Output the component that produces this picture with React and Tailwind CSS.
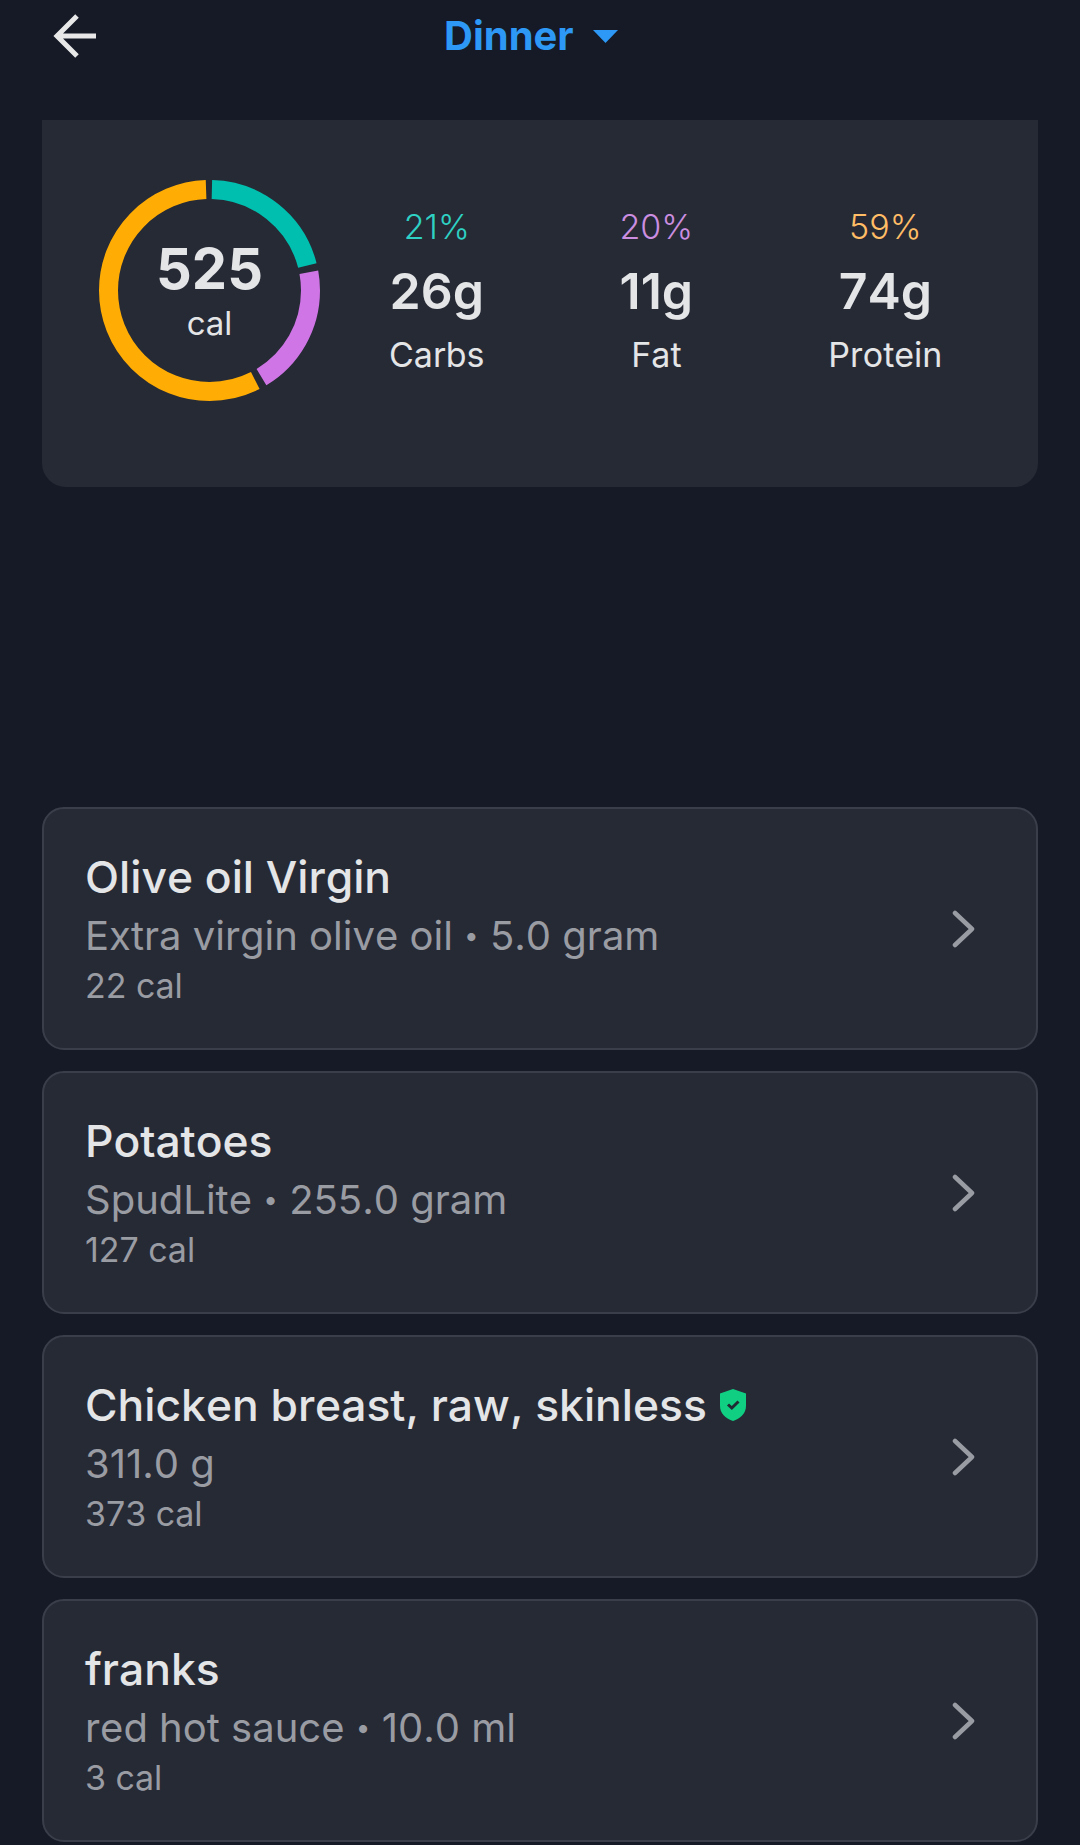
const font = { fontFamily: '"Inter", "Liberation Sans", sans-serif' };

const macros = [
  { pct: '21%', grams: '26g', label: 'Carbs', color: 'text-[#2ed1c3]' },
  { pct: '20%', grams: '11g', label: 'Fat', color: 'text-[#cb8ee0]' },
  { pct: '59%', grams: '74g', label: 'Protein', color: 'text-[#ffbd66]' },
];

const foods = [
  { name: 'Olive oil Virgin', brand: 'Extra virgin olive oil', amount: '5.0 gram', cal: '22 cal' },
  { name: 'Potatoes', brand: 'SpudLite', amount: '255.0 gram', cal: '127 cal' },
  { name: 'Chicken breast, raw, skinless', amount: '311.0 g', cal: '373 cal', verified: true },
  { name: 'franks', brand: 'red hot sauce', amount: '10.0 ml', cal: '3 cal' },
];

// start/end are degrees clockwise from the top of the ring
const segments = [
  { start: 1.4, end: 75.6, color: '#00bfae' },
  { start: 79.6, end: 149, color: '#cf75e6' },
  { start: 153, end: 358, color: '#ffad05' },
];

function Ring() {
  return (
    <div className="relative w-[221px] h-[221px] shrink-0">
      <svg width="221" height="221" viewBox="0 0 221 221" className="-rotate-90">
        {segments.map((s) => (
          <circle
            key={s.color}
            cx="110.5"
            cy="110.5"
            r="101"
            fill="none"
            stroke={s.color}
            strokeWidth="19"
            pathLength="360"
            strokeDasharray={`${s.end - s.start} 360`}
            strokeDashoffset={-s.start}
          />
        ))}
      </svg>
      <div className="absolute inset-0 flex flex-col items-center justify-center text-[#e4e5e7]">
        <span className="text-[56px] leading-[60px] font-bold mt-[1px]">525</span>
        <span className="text-[33px] leading-[40px] mt-[4px]">cal</span>
      </div>
    </div>
  );
}

function ShieldCheck() {
  return (
    <svg width="26" height="32" viewBox="0 0 26 32" className="shrink-0 ml-[13px]">
      <path d="M13 0 L26 4.5 V17 C26 24.5 20 29.5 13 32 C6 29.5 0 24.5 0 17 V4.5 Z" fill="#10cf83" />
      <path d="M8 15.5 L11.8 19 L18.5 12.5" fill="none" stroke="#1f2a33" strokeWidth="3" />
    </svg>
  );
}

function FoodCard({ food }) {
  return (
    <div className="h-[243px] flex items-center justify-between pl-[41px] pr-[60px] bg-[#262a35] border-2 border-[#3a3e4a] rounded-[22px]">
      <div className="flex flex-col">
        <div className="flex items-center text-[44.4px] leading-[56px] font-medium text-[#e4e5e7]">
          {food.name}
          {food.verified && <ShieldCheck />}
        </div>
        <div className="text-[40px] leading-[58px] mt-[2px] text-[#9a9ca3]">
          {food.brand && (
            <>
              {food.brand} <span className="text-[26px] align-[5px]">•</span>{' '}
            </>
          )}
          {food.amount}
        </div>
        <div className="text-[34px] leading-[46px] -mt-[2px] text-[#9a9ca3]">{food.cal}</div>
      </div>
      <svg width="24" height="38" viewBox="0 0 24 38" fill="none" stroke="#9a9ca3" strokeWidth="4.5" strokeLinecap="round" strokeLinejoin="round">
        <path d="M3 3 L20 19 L3 35" />
      </svg>
    </div>
  );
}

export default function App() {
  return (
    <div className="min-h-[1845px] bg-[#151a26] overflow-hidden [font-kerning:none]" style={font}>
      <div className="flex items-center h-[72px] mb-[48px] pl-[53px]">
        <svg width="44" height="44" viewBox="0 0 44 44" fill="none" stroke="#e8e8e8" strokeWidth="5">
          <path d="M43 22 H4 M24 2 L4 22 L24 42" />
        </svg>
        <span className="ml-[347px] text-[40px] font-bold text-[#2d98f5]">Dinner</span>
        <svg width="25" height="13" viewBox="0 0 25 13" className="ml-[19px]">
          <path d="M0 0 H25 L12.5 13 Z" fill="#2d98f5" />
        </svg>
      </div>

      <div className="mx-[42px] h-[367px] bg-[#262a35] rounded-b-[24px] pl-[57px] pt-[60px]">
        <div className="flex items-start">
          <Ring />
          <div className="flex gap-[135px] ml-[69px] pt-[25px]">
            {macros.map((m) => (
              <div key={m.label} className="flex flex-col items-center">
                <span className={`text-[34px] leading-[44px] font-light ${m.color}`}>{m.pct}</span>
                <span className="text-[50px] leading-[68px] mt-[8px] font-semibold text-[#e4e5e7]">{m.grams}</span>
                <span className="text-[34px] leading-[48px] mt-[6px] text-[#e4e5e7]">{m.label}</span>
              </div>
            ))}
          </div>
        </div>
      </div>

      <div className="mx-[42px] mt-[320px] flex flex-col gap-[21px]">
        {foods.map((f) => (
          <FoodCard key={f.name} food={f} />
        ))}
      </div>
    </div>
  );
}
